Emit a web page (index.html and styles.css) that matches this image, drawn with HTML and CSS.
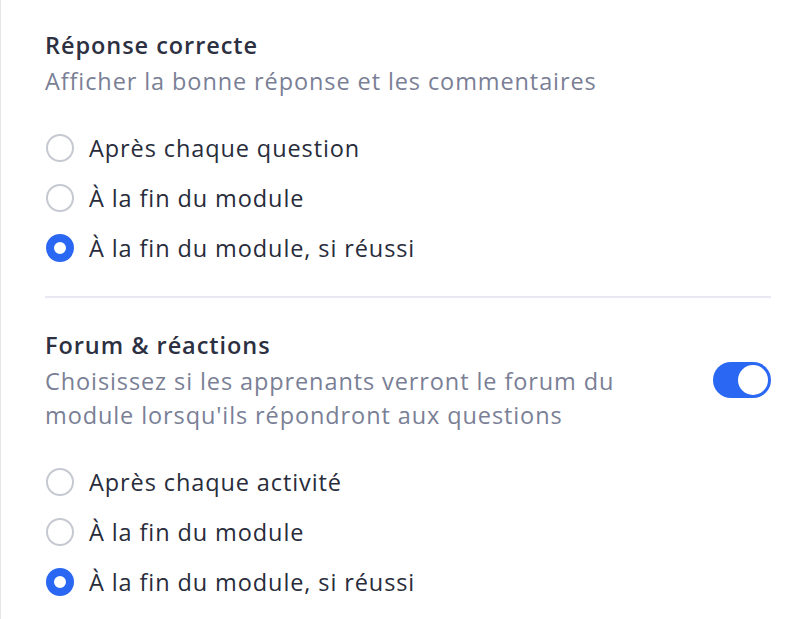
FILE: index.html
```html
<!DOCTYPE html>
<html lang="fr">
<head>
  <meta charset="UTF-8">
  <meta name="viewport" content="width=device-width, initial-scale=1.0">
  <title>Paramètres du module</title>
  <link rel="stylesheet" href="styles.css">
</head>
<body>
  <div class="panel">
    <div class="setting">
      <div class="setting-head">
        <div class="setting-text">
          <h2>Réponse correcte</h2>
          <p>Afficher la bonne réponse et les commentaires</p>
        </div>
      </div>
      <div class="options">
        <label class="option">
          <input type="radio" name="answer" value="question">
          <span class="radio"></span>
          <span>Après chaque question</span>
        </label>
        <label class="option">
          <input type="radio" name="answer" value="end">
          <span class="radio"></span>
          <span>À la fin du module</span>
        </label>
        <label class="option">
          <input type="radio" name="answer" value="passed" checked>
          <span class="radio"></span>
          <span>À la fin du module, si réussi</span>
        </label>
      </div>
    </div>

    <div class="setting">
      <div class="setting-head">
        <div class="setting-text">
          <h2>Forum &amp; réactions</h2>
          <p>Choisissez si les apprenants verront le forum du module lorsqu'ils répondront aux questions</p>
        </div>
        <label class="switch">
          <input type="checkbox" checked>
          <span class="track"></span>
        </label>
      </div>
      <div class="options">
        <label class="option">
          <input type="radio" name="forum" value="activity">
          <span class="radio"></span>
          <span>Après chaque activité</span>
        </label>
        <label class="option">
          <input type="radio" name="forum" value="end">
          <span class="radio"></span>
          <span>À la fin du module</span>
        </label>
        <label class="option">
          <input type="radio" name="forum" value="passed" checked>
          <span class="radio"></span>
          <span>À la fin du module, si réussi</span>
        </label>
      </div>
    </div>
  </div>
</body>
</html>
```

FILE: styles.css
```css
body {
  font-family: "Open Sans", "Noto Sans", sans-serif;
  background-color: #fff;
  color: #282c3b;
  margin: 0;
  padding: 0;
}
.panel {
  min-height: 619px;
  box-sizing: border-box;
  border-left: 1px solid #e6e6ea;
  padding: 28px 29px 0 44px;
}
.setting + .setting {
  border-top: 2px solid #e7e8f1;
  margin-top: 23px;
  padding-top: 30px;
}
.setting-head {
  display: flex;
  align-items: center;
  gap: 40px;
}
.setting-text {
  flex: 1;
}
h2 {
  margin: 0;
  font-size: 23.5px;
  font-weight: 600;
  letter-spacing: 0.95px;
  line-height: 34px;
  color: #2c3041;
}
.setting-text p {
  margin: 2px 0 0;
  font-size: 23.5px;
  letter-spacing: 0.9px;
  line-height: 34px;
  color: #7a7f96;
}
.options {
  margin-top: 25px;
}
.option {
  display: flex;
  align-items: center;
  gap: 15px;
  height: 50px;
  font-size: 23.5px;
  letter-spacing: 0.9px;
  cursor: pointer;
}
.option input,
.switch input {
  display: none;
}
.radio {
  width: 28px;
  height: 28px;
  box-sizing: border-box;
  border: 2px solid #c6c9d1;
  border-radius: 50%;
  margin-left: 1px;
}
.option input:checked + .radio {
  border: 8px solid #2a67f2;
}
.switch {
  display: block;
  cursor: pointer;
}
.track {
  display: block;
  position: relative;
  width: 58px;
  height: 36px;
  border-radius: 18px;
  background-color: #c6c9d1;
}
.track::after {
  content: "";
  position: absolute;
  top: 3px;
  left: 3px;
  width: 30px;
  height: 30px;
  border-radius: 50%;
  background-color: #fff;
}
.switch input:checked + .track {
  background-color: #2a67f2;
}
.switch input:checked + .track::after {
  left: 25px;
}
```
